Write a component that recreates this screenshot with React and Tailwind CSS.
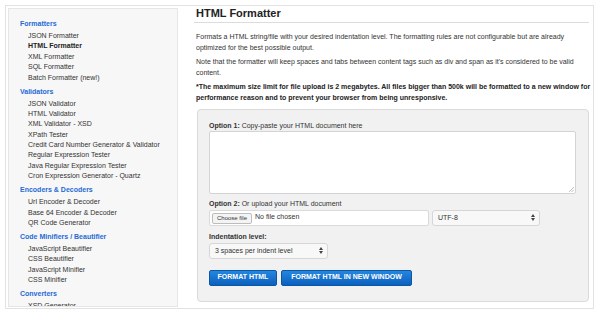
import React from "react";

const sections = [
  { title: "Formatters", items: ["JSON Formatter", "HTML Formatter", "XML Formatter", "SQL Formatter", "Batch Formatter (new!)"] },
  { title: "Validators", items: ["JSON Validator", "HTML Validator", "XML Validator - XSD", "XPath Tester", "Credit Card Number Generator & Validator", "Regular Expression Tester", "Java Regular Expression Tester", "Cron Expression Generator - Quartz"] },
  { title: "Encoders & Decoders", items: ["Url Encoder & Decoder", "Base 64 Encoder & Decoder", "QR Code Generator"] },
  { title: "Code Minifiers / Beautifier", items: ["JavaScript Beautifier", "CSS Beautifier", "JavaScript Minifier", "CSS Minifier"] },
  { title: "Converters", items: ["XSD Generator"] },
];

function Arrows() {
  return (
    <svg width="4" height="7" viewBox="0 0 4 7" className="shrink-0">
      <path d="M0 3 L2 0 L4 3 Z" fill="#444" />
      <path d="M0 4 L2 7 L4 4 Z" fill="#444" />
    </svg>
  );
}

export default function App() {
  return (
    <div
      className="w-[600px] h-[314px] bg-white pt-[5px] pl-[5px] overflow-hidden text-[#333]"
      style={{ fontFamily: '"Liberation Sans", Arial, sans-serif' }}
    >
      <div className="w-[589px] h-[304px] border border-[#e2e2e2] flex overflow-hidden">
        {/* Sidebar */}
        <div className="ml-[2px] mt-[2px] mb-[1px] w-[170px] bg-[#f7f7f7] border border-[#e6e6e6] pt-[10px] pl-[11px] overflow-hidden shrink-0">
          {sections.map((s) => (
            <div key={s.title} className="mb-[3.6px]">
              <div className="text-[7px] leading-[10.4px] h-[10.4px] font-bold text-[#1f6ad6] mb-[1.6px] whitespace-nowrap">{s.title}</div>
              {s.items.map((it) => (
                <div
                  key={it}
                  className={`pl-[8px] text-[7px] leading-[10.4px] h-[10.4px] whitespace-nowrap ${it === "HTML Formatter" ? "font-bold text-[#222]" : "text-[#333]"}`}
                >
                  {it}
                </div>
              ))}
            </div>
          ))}
        </div>

        {/* Main */}
        <div className="ml-[16px] w-[395px] flex flex-col">
          <div className="h-[17px] border-b border-[#dcdcdc] pl-[2px]">
            <div className="text-[11px] leading-[14px] font-bold text-[#222]">HTML Formatter</div>
          </div>
          <div className="pl-[2px] mt-[7.5px] text-[7px] leading-[11px] whitespace-nowrap">
            <div>Formats a HTML string/file with your desired indentation level. The formatting rules are not configurable but are already</div>
            <div>optimized for the best possible output.</div>
          </div>
          <div className="pl-[2px] mt-[3px] text-[7px] leading-[11px] whitespace-nowrap">
            <div>Note that the formatter will keep spaces and tabs between content tags such as div and span as it's considered to be valid</div>
            <div>content.</div>
          </div>
          <div className="pl-[2px] mt-[3px] text-[7px] leading-[11px] font-bold text-[#222] whitespace-nowrap">
            <div>*The maximum size limit for file upload is 2 megabytes. All files bigger than 500k will be formatted to a new window for</div>
            <div>performance reason and to prevent your browser from being unresponsive.</div>
          </div>

          {/* Panel */}
          <div className="ml-[3px] mt-[6px] w-[392px] h-[193px] bg-[#f1f1f1] border border-[#dadada] rounded-[4px] pt-[11px] px-[11px]">
            <div className="text-[7px] leading-[10px] whitespace-nowrap">
              <span className="font-bold">Option 1:</span> Copy-paste your HTML document here
            </div>
            <div className="relative w-[367px] h-[63px] bg-white border border-[#d4d4d4] rounded-[2px]">
              <svg width="5" height="5" viewBox="0 0 5 5" className="absolute right-[1px] bottom-[1px]">
                <path d="M0 5 L5 0 M2.5 5 L5 2.5" stroke="#999" strokeWidth="0.6" />
              </svg>
            </div>
            <div className="mt-[5px] text-[7px] leading-[10px] whitespace-nowrap">
              <span className="font-bold">Option 2:</span> Or upload your HTML document
            </div>
            <div className="mt-[1px] flex gap-[3px] h-[16px]">
              <div className="w-[220px] h-[16px] bg-white border border-[#dadada] rounded-[2px] flex items-start pl-[2px] pt-[2px] gap-[3px]">
                <div className="h-[11px] px-[4px] border border-[#bdbdbd] rounded-[2px] bg-[#f4f4f4] text-[6px] leading-[9px] whitespace-nowrap">Choose file</div>
                <div className="text-[7px] leading-[8px] whitespace-nowrap">No file chosen</div>
              </div>
              <div className="w-[108px] h-[16px] bg-[#f8f8f8] border border-[#d6d6d6] rounded-[3px] flex items-center justify-between pl-[5px] pr-[4px]">
                <span className="text-[7px] leading-[10px]">UTF-8</span>
                <Arrows />
              </div>
            </div>
            <div className="mt-[6px] text-[7px] leading-[10px] font-bold whitespace-nowrap">Indentation level:</div>
            <div className="mt-[1px] w-[119px] h-[16px] bg-[#f8f8f8] border border-[#d6d6d6] rounded-[3px] flex items-center justify-between pl-[5px] pr-[4px]">
              <span className="text-[7px] leading-[10px] whitespace-nowrap">3 spaces per indent level</span>
              <Arrows />
            </div>
            <div className="mt-[11px] flex gap-[4px]">
              <div className="w-[68px] h-[16px] rounded-[2px] border border-[#0a57a8] bg-gradient-to-b from-[#2486df] to-[#0b60bd] text-white text-[7px] font-bold flex items-center justify-center whitespace-nowrap">FORMAT HTML</div>
              <div className="w-[131px] h-[16px] rounded-[2px] border border-[#0a57a8] bg-gradient-to-b from-[#2486df] to-[#0b60bd] text-white text-[7px] font-bold flex items-center justify-center whitespace-nowrap">FORMAT HTML IN NEW WINDOW</div>
            </div>
          </div>
        </div>
      </div>
    </div>
  );
}
